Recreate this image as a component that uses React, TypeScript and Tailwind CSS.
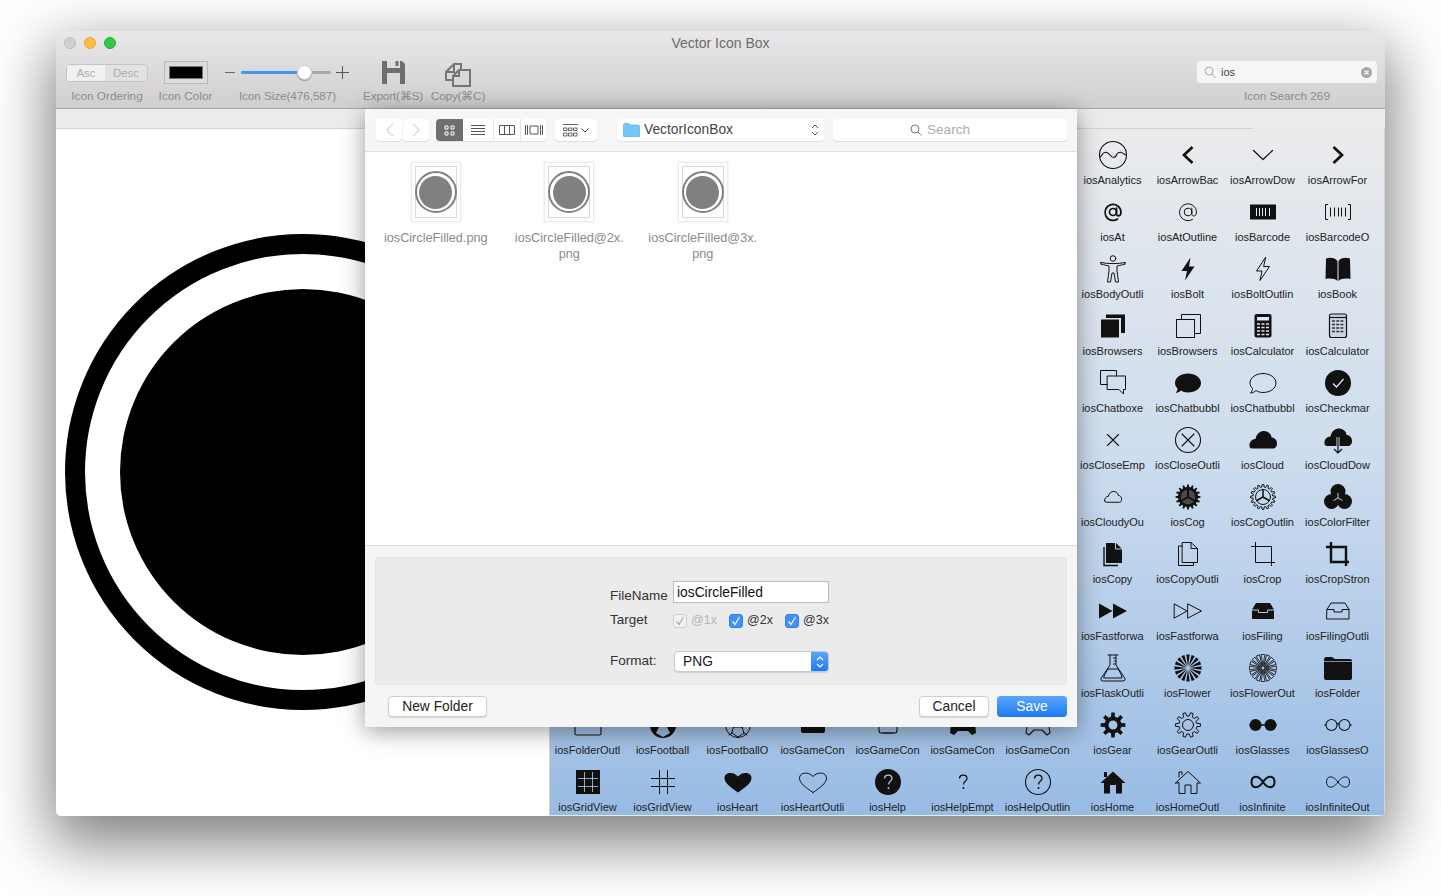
import type { ReactNode } from 'react';

const gearPoints = (teeth: number, outer: number, inner: number) => {
  const step = (Math.PI * 2) / teeth;
  const pts: string[] = [];
  for (let k = 0; k < teeth; k++) {
    const a = k * step;
    [
      [inner, a - step * 0.3],
      [outer, a - step * 0.17],
      [outer, a + step * 0.17],
      [inner, a + step * 0.3],
    ].forEach(([r, t]) => pts.push(`${(r * Math.cos(t)).toFixed(2)} ${(r * Math.sin(t)).toFixed(2)}`));
  }
  return `M${pts.join('L')}Z`;
};

const Line = ({ children, w = 1.1 }: { children: ReactNode; w?: number }) => (
  <g fill="none" stroke="currentColor" strokeWidth={w} strokeLinecap="round" strokeLinejoin="round">
    {children}
  </g>
);

const Spokes = ({ r = 8, w = 1.4 }: { r?: number; w?: number }) => (
  <g stroke="currentColor" strokeWidth={w}>
    <path d={`M0 0V${-r}M0 0L${r * 0.87} ${r * 0.5}M0 0L${-r * 0.87} ${r * 0.5}`} />
  </g>
);

const cloud = 'M-13.500 6C-14 2-11-1-7.500-1C-6.500-6.500-2.500-9 1-9C5-9 8.500-6 8.500-2.500C11.500-2.500 14 0 14 3.500C14 7 12 8.500 10 8.500H-10C-12 8.500-13.500 8-13.500 6Z';
const heart = 'M0 10.5C-8 5-13.5 1-13.5-4C-13.5-9.500-5-11 0-5.500C5-11 13.500-9.500 13.500-4C13.500 1 8 5 0 10.500Z';
const infinite = 'M0 0C-3-4.500-6.500-5.500-8.500-5C-12.500-4-12.500 4-8.500 5C-6.500 5.500-3 4.500 0 0C3-4.500 6.500-5.500 8.500-5C12.500-4 12.500 4 8.500 5C6.500 5.500 3 4.500 0 0Z';
const bolt = 'M2.500-11.500L-6.500 2H-1L-3 11.500L6.500-2.500H1Z';
const flask = 'M-3-13V-3L-12 10.500Q-12.500 13-10 13H10Q12.500 13 12 10.500L3-3V-13';
const bubble = 'M0-9.500C7-9.500 13-5.500 13 0C13 5.500 7 9.500 0 9.500C-3 9.500-5.500 8.500-7 7.500C-8.500 9-10.500 10-12.500 10C-11 8.500-10.500 7-10.500 5.500C-12 4-13 2-13 0C-13-5.500-7-9.500 0-9.500Z';
const homeBody = 'M-12.500 1L0-10.500L12.500 1H9V11.500H3V3H-3V11.500H-9V1Z';
const helpMark = 'M-3.500-3.500C-3.500-8 4-8 4-3.500C4-1 0.500-1 0.500 2.500';

const icons: Record<string, ReactNode> = {
  analytics: (
    <Line>
      <circle r="13.500" />
      <path d="M-12.500 2C-9-4-6-4-3 0C-1 3 2 4 4-1C6-4 9-3 12.500 0" />
    </Line>
  ),
  back: <Line w={2.700}><path d="M4.500-8L-4 0L4.500 8" strokeLinecap="butt" strokeLinejoin="miter" /></Line>,
  down: <Line w={1.200}><path d="M-9.500-4.500L0 4.500L9.500-4.500" /></Line>,
  forward: <Line w={2.700}><path d="M-4.500-8L4 0L-4.500 8" strokeLinecap="butt" strokeLinejoin="miter" /></Line>,
  at: (
    <Line w={1.700}>
      <circle r="3.500" />
      <path d="M3.500-4V1.500C3.500 5 8 5 8 0A8 8 0 1 0 4.500 7" />
    </Line>
  ),
  atOutline: (
    <Line w={1}>
      <circle r="3.800" />
      <path d="M3.800-4V1.500C3.800 5 8.500 5 8.500 0A8.500 8.500 0 1 0 4.500 7.500" />
    </Line>
  ),
  barcode: (
    <>
      <rect x="-13" y="-7.500" width="26" height="15" fill="currentColor" />
      <path d="M-6.500-4V4M-3.500-4V4M-0.500-4V4M2.500-4V4M6.500-4V4" stroke="#e6e9ee" strokeWidth="1" />
    </>
  ),
  barcodeOutline: (
    <Line w={1}>
      <path d="M-10-7.500H-12.500V7.500H-10M10-7.500H12.500V7.500H10" strokeLinecap="butt" strokeLinejoin="miter" />
      <path d="M-7.500-4.500V4.500M-3.500-4.500V4.500M0.500-4.500V4.500M3.500-4.500V4.500M7.500-4.500V4.500" strokeLinecap="butt" />
    </Line>
  ),
  body: (
    <Line w={1}>
      <circle cy="-10.500" r="2.800" />
      <path d="M-12-6.500C-6-5 6-5 12-6.500M-12-5C-8-3.500-5-3.500-4-3L-4 2L-5.500 13H-2.500L-1 4H1L2.500 13H5.500L4 2L4-3C5-3.500 8-3.500 12-5" />
      <path d="M-12-6.500V-5M12-6.500V-5" />
    </Line>
  ),
  bolt: <path d={bolt} fill="currentColor" />,
  boltOutline: <Line w={1}><path d={bolt} /></Line>,
  book: (
    <path
      fill="currentColor"
      d="M-0.500-8C-3-11.500-8-12-12-10.500L-12.500 10C-8 9-3 9.500-0.500 12ZM0.500-8C3-11.500 8-12 12-10.500L12.500 10C8 9 3 9.500 0.500 12Z"
    />
  ),
  browsers: (
    <>
      <rect x="-12" y="-6.500" width="18" height="18" fill="currentColor" />
      <path d="M-7-8V-11.500H12V7H8V-8Z" fill="currentColor" />
    </>
  ),
  browsersOutline: (
    <Line w={1}>
      <rect x="-11.500" y="-6.500" width="18" height="18" strokeLinejoin="miter" />
      <path d="M-6.500-6.500V-11.500H12.500V7.500H6.500" strokeLinejoin="miter" />
    </Line>
  ),
  calculator: (
    <>
      <rect x="-8.500" y="-12" width="17" height="23.500" rx="2" fill="currentColor" />
      <rect x="-6" y="-9" width="12" height="3.500" fill="#dfe6f0" />
      <path d="M-6-2H6M-6 1.500H6M-6 5H6M-6 8.500H6" stroke="#dfe6f0" strokeWidth="1.600" strokeDasharray="3 1.500" />
    </>
  ),
  calculatorOutline: (
    <>
      <rect x="-8.500" y="-12" width="17" height="23.500" rx="2" fill="#c9d5e6" stroke="currentColor" strokeWidth="1.200" />
      <path d="M-8-8.500H8" stroke="currentColor" strokeWidth="1.200" />
      <path d="M-6-5H6M-6-1.500H6M-6 2H6M-6 5.500H6" stroke="#333" strokeWidth="1.500" strokeDasharray="3 1.200" />
    </>
  ),
  chatboxes: (
    <Line w={1}>
      <path d="M3.500-7V-12.500H-12.500V1.500H-5.500" strokeLinejoin="miter" />
      <path d="M-5.500-7H12.500V6.500H10.500V11L6 6.500H-5.500Z" strokeLinejoin="miter" />
    </Line>
  ),
  chatbubble: <path d={bubble} fill="currentColor" />,
  chatbubbleOutline: <Line w={1}><path d={bubble} /></Line>,
  checkmark: (
    <>
      <circle r="13" fill="currentColor" />
      <path d="M-5 0.500L-1.500 4L5.500-4" fill="none" stroke="#e4eaf3" strokeWidth="1.200" />
    </>
  ),
  closeEmpty: <Line w={1.100}><path d="M-5.500-5.500L5.500 5.500M5.500-5.500L-5.500 5.500" /></Line>,
  closeOutline: (
    <Line w={1.100}>
      <circle r="12.500" />
      <path d="M-6-6L6 6M6-6L-6 6" />
    </Line>
  ),
  cloud: <path d={cloud} fill="currentColor" />,
  cloudDownload: (
    <>
      <path d={cloud} transform="translate(0 -2.500)" fill="currentColor" />
      <path d="M0-3V13M-4 9L0 13L4 9" fill="none" stroke="#c2d4ea" strokeWidth="3" />
      <path d="M0-3V13M-4 9L0 13L4 9" fill="none" stroke="currentColor" strokeWidth="1.200" />
    </>
  ),
  cloudyOutline: <Line w={1}><path d={cloud} transform="scale(0.62)" strokeWidth={1.600} /></Line>,
  cog: (
    <>
      <path d={gearPoints(16, 12.500, 10)} fill="currentColor" />
      <circle r="8" fill="#4a4a4a" stroke="currentColor" strokeWidth="1.500" />
      <Spokes r={7.500} w={2} />
    </>
  ),
  cogOutline: (
    <>
      <Line w={1}><path d={gearPoints(16, 12.500, 10)} /><circle r="7.500" /></Line>
      <Spokes r={7.500} w={1.500} />
    </>
  ),
  colorFilter: (
    <>
      <circle cy="-5.500" r="7.500" fill="currentColor" />
      <circle cx="-6.500" cy="4.500" r="7.500" fill="currentColor" />
      <circle cx="6.500" cy="4.500" r="7.500" fill="currentColor" />
      <g stroke="#bdd2ea" strokeWidth="1"><path d="M0 1V-4M0 1L4.500 3.500M0 1L-4.500 3.500" /></g>
    </>
  ),
  copy: (
    <>
      <path d="M-7-11H3L9-5V9H-7Z" fill="currentColor" />
      <path d="M2.500-11V-5H9" fill="none" stroke="#bed2ea" strokeWidth="1" />
      <path d="M-9-7V11.500H5" fill="none" stroke="currentColor" strokeWidth="1.400" />
    </>
  ),
  copyOutline: (
    <Line w={1}>
      <path d="M-5.500-11.500H3L9.500-5.500V8.500H-5.500Z" strokeLinejoin="miter" />
      <path d="M3-11.500V-5.500H9.500" />
      <path d="M-5.500-8H-9.500V11.500H5.500V8.500" strokeLinejoin="miter" />
    </Line>
  ),
  crop: (
    <Line w={1}>
      <path d="M-7.500-12V-7.500H8.500V12M-12-7.500H-7.500V8.500H12" strokeLinecap="butt" strokeLinejoin="miter" />
    </Line>
  ),
  cropStrong: (
    <Line w={2.400}>
      <path d="M-7-12V8H11M-12-7H8V12" strokeLinecap="butt" strokeLinejoin="miter" />
    </Line>
  ),
  fastforward: <path fill="currentColor" d="M-14-7.500L-0.500 0L-14 7.500ZM0-7.500L14 0L0 7.500Z" />,
  fastforwardOutline: (
    <Line w={1}>
      <path d="M-13.500-7L-1 0L-13.500 7ZM0-7L13.500 0L0 7Z" />
    </Line>
  ),
  filing: (
    <>
      <path d="M-11-1.500L-7-8H7L11-1.500V8H-11Z" fill="currentColor" />
      <path d="M-11.500-1H-4.500V1.500H4.500V-1H11.500" fill="none" stroke="#b3cbe7" strokeWidth="1" />
    </>
  ),
  filingOutline: (
    <Line w={1}>
      <path d="M-11-1.500L-7-8H7L11-1.500V8H-11Z" />
      <path d="M-11-1.500H-4V1H4V-1.500H11" />
    </Line>
  ),
  flask: (
    <>
      <Line w={1}>
        <path d={flask} />
        <path d="M-5-13H5M-8 6L-5 1H5L8 6L9 10H-9Z" />
      </Line>
      <path d="M0-10H3M1-7H3M0-4H3" stroke="currentColor" strokeWidth="1" />
    </>
  ),
  flower: (
    <g fill="currentColor">
      {[...Array(16)].map((_, i) => (
        <path key={i} d="M0-1.500L-1.700-13.500H1.700Z" transform={`rotate(${(i * 360) / 16})`} />
      ))}
    </g>
  ),
  flowerOutline: (
    <>
      <g fill="none" stroke="currentColor" strokeWidth="0.800">
        {[...Array(16)].map((_, i) => (
          <path key={i} d="M0-2.500L-1.900-13.500H1.900Z" transform={`rotate(${(i * 360) / 16})`} />
        ))}
      </g>
      <circle r="2" fill="none" stroke="currentColor" strokeWidth="1" />
    </>
  ),
  folder: (
    <>
      <path d="M-14-8.500Q-14-11-12-11H-6L-3-9H12Q14-9 14-7V10Q14 12 12 12H-12Q-14 12-14 10Z" fill="currentColor" />
      <path d="M-14-6.500H14" stroke="#a6c3e5" strokeWidth="0.700" />
    </>
  ),
  folderOutline: <Line w={1.100}><rect x="-13" y="-8" width="26" height="18" rx="1.500" /></Line>,
  football: (
    <>
      <circle r="13" fill="currentColor" />
      <path d="M-4 2H4L7 8L0 12L-7 8Z" fill="#9dbde4" />
    </>
  ),
  footballOutline: (
    <Line w={1}>
      <circle r="12.500" />
      <path d="M-4 2H4L6 8L0 12L-6 8ZM-4 2L-11 0M4 2L11 0M6 8L9 10M-6 8L-9 10" />
    </Line>
  ),
  gameA: <path d="M-12 0H12V6Q12 8 10 8H-10Q-12 8-12 6Z" fill="currentColor" />,
  gameAOutline: <Line w={1.100}><path d="M-9 2V5Q-9 8-7 8H7Q9 8 9 5V2" /><path d="M-5 8H5" /></Line>,
  gameB: <path d="M-12-2H12L13 8L9 10L5 6H-5L-9 10L-13 8Z" fill="currentColor" />,
  gameBOutline: <Line w={1.100}><path d="M-11 2L-12 8L-9 10L-4 5H4L9 10L12 8L11 2" /></Line>,
  gear: (
    <path
      fillRule="evenodd"
      fill="currentColor"
      d={`${gearPoints(8, 12.500, 8.500)}M4.500 0A4.500 4.500 0 1 0-4.500 0A4.500 4.500 0 1 0 4.500 0Z`}
    />
  ),
  gearOutline: (
    <Line w={1}>
      <path d={gearPoints(10, 12.500, 9)} />
      <circle r="5.500" />
    </Line>
  ),
  glasses: (
    <>
      <circle cx="-7.500" r="6" fill="currentColor" />
      <circle cx="7.500" r="6" fill="currentColor" />
      <path d="M-13.500 0H13.500" stroke="currentColor" strokeWidth="1.500" />
    </>
  ),
  glassesOutline: (
    <Line w={1.100}>
      <circle cx="-6.500" r="5.500" />
      <circle cx="6.500" r="5.500" />
      <path d="M-1-1C-0.500-1.500 0.500-1.500 1-1M-12 0H-13.500M12 0H13.500" />
    </Line>
  ),
  grid: (
    <>
      <rect x="-12" y="-12" width="24" height="24" fill="currentColor" />
      <path d="M-3.500-10V10M4.500-10V10M-10-3.500H10M-10 4.500H10" stroke="#b7cfec" strokeWidth="0.800" />
    </>
  ),
  gridOutline: <Line w={1}><path d="M-3.500-12V12M4.500-12V12M-12-3.500H12M-12 4.500H12" strokeLinecap="butt" /></Line>,
  heart: <path d={heart} fill="currentColor" />,
  heartOutline: <Line w={1}><path d={heart} /></Line>,
  help: (
    <>
      <circle r="13" fill="currentColor" />
      <path d={helpMark} fill="none" stroke="#a8c4e6" strokeWidth="1.300" />
      <circle cx="0.500" cy="6" r="1" fill="#a8c4e6" />
    </>
  ),
  helpEmpty: (
    <>
      <path d={helpMark} fill="none" stroke="currentColor" strokeWidth="1.300" />
      <circle cx="0.500" cy="6" r="1" fill="currentColor" />
    </>
  ),
  helpOutline: (
    <>
      <circle r="12.500" fill="none" stroke="currentColor" strokeWidth="1.100" />
      <path d={helpMark} fill="none" stroke="currentColor" strokeWidth="1.300" />
      <circle cx="0.500" cy="6" r="1" fill="currentColor" />
    </>
  ),
  home: (
    <>
      <path d="M-9-10H-6V-5H-9Z" fill="currentColor" />
      <path d={homeBody} fill="currentColor" />
    </>
  ),
  homeOutline: (
    <Line w={1}>
      <path d="M-9-5V-10H-6V-7.500" strokeLinejoin="miter" />
      <path d={homeBody} strokeLinejoin="miter" />
    </Line>
  ),
  infinite: <Line w={2}><path d={infinite} /></Line>,
  infiniteOutline: <Line w={1}><path d={infinite} /></Line>,
};

type Cell = { name: string; icon: string } | null;

const c = (name: string, icon: string): Cell => ({ name, icon });
const hidden: Cell[] = [null, null, null, null, null, null, null];

const rows: Cell[][] = [
  [...hidden, c('iosAnalytics', 'analytics'), c('iosArrowBac', 'back'), c('iosArrowDow', 'down'), c('iosArrowFor', 'forward')],
  [...hidden, c('iosAt', 'at'), c('iosAtOutline', 'atOutline'), c('iosBarcode', 'barcode'), c('iosBarcodeO', 'barcodeOutline')],
  [...hidden, c('iosBodyOutli', 'body'), c('iosBolt', 'bolt'), c('iosBoltOutlin', 'boltOutline'), c('iosBook', 'book')],
  [...hidden, c('iosBrowsers', 'browsers'), c('iosBrowsers', 'browsersOutline'), c('iosCalculator', 'calculator'), c('iosCalculator', 'calculatorOutline')],
  [...hidden, c('iosChatboxe', 'chatboxes'), c('iosChatbubbl', 'chatbubble'), c('iosChatbubbl', 'chatbubbleOutline'), c('iosCheckmar', 'checkmark')],
  [...hidden, c('iosCloseEmp', 'closeEmpty'), c('iosCloseOutli', 'closeOutline'), c('iosCloud', 'cloud'), c('iosCloudDow', 'cloudDownload')],
  [...hidden, c('iosCloudyOu', 'cloudyOutline'), c('iosCog', 'cog'), c('iosCogOutlin', 'cogOutline'), c('iosColorFilter', 'colorFilter')],
  [...hidden, c('iosCopy', 'copy'), c('iosCopyOutli', 'copyOutline'), c('iosCrop', 'crop'), c('iosCropStron', 'cropStrong')],
  [...hidden, c('iosFastforwa', 'fastforward'), c('iosFastforwa', 'fastforwardOutline'), c('iosFiling', 'filing'), c('iosFilingOutli', 'filingOutline')],
  [...hidden, c('iosFlaskOutli', 'flask'), c('iosFlower', 'flower'), c('iosFlowerOut', 'flowerOutline'), c('iosFolder', 'folder')],
  [
    c('iosFolderOutl', 'folderOutline'), c('iosFootball', 'football'), c('iosFootballO', 'footballOutline'), c('iosGameCon', 'gameA'),
    c('iosGameCon', 'gameAOutline'), c('iosGameCon', 'gameB'), c('iosGameCon', 'gameBOutline'), c('iosGear', 'gear'),
    c('iosGearOutli', 'gearOutline'), c('iosGlasses', 'glasses'), c('iosGlassesO', 'glassesOutline'),
  ],
  [
    c('iosGridView', 'grid'), c('iosGridView', 'gridOutline'), c('iosHeart', 'heart'), c('iosHeartOutli', 'heartOutline'),
    c('iosHelp', 'help'), c('iosHelpEmpt', 'helpEmpty'), c('iosHelpOutlin', 'helpOutline'), c('iosHome', 'home'),
    c('iosHomeOutl', 'homeOutline'), c('iosInfinite', 'infinite'), c('iosInfiniteOut', 'infiniteOutline'),
  ],
];

function IconCell({ cell }: { cell: Cell }) {
  if (!cell) return <div className="h-[57px]" />;
  return (
    <div className="flex h-[57px] flex-col items-center pt-2">
      <svg viewBox="-18 -18 36 36" className="h-9 w-9 text-[#111]">
        {icons[cell.icon]}
      </svg>
      <span className="mt-[1px] whitespace-nowrap text-[11px] leading-3 text-[#222]">{cell.name}</span>
    </div>
  );
}

function ToolbarItem({ label, className, children }: { label: string; className: string; children: ReactNode }) {
  return (
    <div className={`flex flex-col items-center ${className}`}>
      <div className="flex h-[26px] items-center">{children}</div>
      <span className="mt-[4px] whitespace-nowrap text-[11.800px] leading-[14px] text-[#8c8c8c]">{label}</span>
    </div>
  );
}

function Toolbar() {
  return (
    <div className="h-[78px] shrink-0 rounded-t-[5px] border-b border-[#a9a9a9] bg-gradient-to-b from-[#e9e7e9] to-[#d0ced0]">
      <div className="relative flex h-[24px] items-center pl-2">
        <div className="flex gap-2">
          <span className="h-3 w-3 rounded-full border border-[#bcbcbc] bg-[#cfcfcf]" />
          <span className="h-3 w-3 rounded-full border border-[#e6a63a] bg-[#fdbc40]" />
          <span className="h-3 w-3 rounded-full border border-[#2ba83c] bg-[#33c748]" />
        </div>
        <span className="flex-1 pr-[60px] text-center text-[14px] text-[#6b6b6b]">Vector Icon Box</span>
      </div>
      <div className="flex pt-[4px]">
        <ToolbarItem label="Icon Ordering" className="ml-[10px] w-[82px]">
          <div className="mt-[2px] flex h-[18px] w-[82px] overflow-hidden rounded-[4px] border border-[#c4c4c4] bg-[#f1f1f1] text-[11.500px] leading-4 text-[#adadad]">
            <span className="w-[38px] bg-[#f1f1f1] text-center">Asc</span>
            <span className="flex-1 bg-[#e2e2e2] text-center">Desc</span>
          </div>
        </ToolbarItem>
        <ToolbarItem label="Icon Color" className="ml-[10px] w-[55px]">
          <div className="flex h-[23px] w-[44px] items-center justify-center border border-[#b9b9b9] bg-[#dcdcdc]">
            <div className="h-[13px] w-[34px] border border-[#777] bg-black" />
          </div>
        </ToolbarItem>
        <ToolbarItem label="Icon Size(476,587)" className="ml-[12px] w-[125px] tracking-[-0.1px]">
          <div className="-ml-px flex items-center">
            <span className="h-px w-[10px] bg-[#666]" />
            <div className="ml-[6px] h-[3px] w-[56px] rounded-l-full bg-[#3f97f6]" />
            <div className="h-[15px] w-[15px] rounded-full border border-[#cfcfcf] bg-white shadow-[0_1px_1px_rgba(0,0,0,0.3)]" />
            <div className="h-[3px] w-[19px] rounded-r-full bg-[#a9a9a9]" />
            <svg viewBox="0 0 13 13" className="ml-[5px] h-[13px] w-[13px] text-[#555]">
              <path d="M0 6.500H13M6.500 0V13" stroke="currentColor" strokeWidth="1" />
            </svg>
          </div>
        </ToolbarItem>
        <ToolbarItem label="Export(⌘S)" className="ml-[13px] w-[60px] tracking-[-0.2px]">
          <svg viewBox="0 0 23 23" className="h-[23px] w-[23px] text-[#6e6e6e]">
            <path
              fill="currentColor"
              fillRule="evenodd"
              d="M0 0H20L23 3V23H0ZM5 0V7H18V0ZM5 12V23H18V12Z"
            />
            <path d="M13.500 0H16.500V5H13.500Z" fill="currentColor" />
          </svg>
        </ToolbarItem>
        <ToolbarItem label="Copy(⌘C)" className="ml-[8px] w-[54px] tracking-[-0.2px]">
          <svg viewBox="0 0 26 24" className="mt-[6px] h-[24px] w-[26px] text-[#757575]">
            <g fill="none" stroke="currentColor" strokeWidth="2">
              <path d="M8 17H1V9L9 1H16V7" />
              <path d="M9 1V9H1" />
              <path d="M8 23V13L14 7H25V23Z" />
              <path d="M14 7V13H8" />
            </g>
          </svg>
        </ToolbarItem>
        <ToolbarItem label="Icon Search 269" className="ml-auto mr-[8px] w-[180px]">
          <div className="flex h-[22px] w-[180px] items-center rounded-[4px] bg-[#f6f6f6] pl-[7px] pr-[5px]">
            <svg viewBox="0 0 12 12" className="h-3 w-3 text-[#a8a8a8]">
              <circle cx="5" cy="5" r="4" fill="none" stroke="currentColor" />
              <path d="M8 8L11.500 11.500" stroke="currentColor" />
            </svg>
            <span className="ml-[5px] flex-1 text-[11px] text-[#444]">ios</span>
            <svg viewBox="0 0 11 11" className="h-[11px] w-[11px]">
              <circle cx="5.500" cy="5.500" r="5.500" fill="#a8a8a8" />
              <path d="M3.500 3.500L7.500 7.500M7.500 3.500L3.500 7.500" stroke="#f6f6f6" strokeWidth="1.200" />
            </svg>
          </div>
        </ToolbarItem>
      </div>
    </div>
  );
}

function FileTile({ lines }: { lines: string[] }) {
  return (
    <div className="flex w-[133.500px] flex-col items-center">
      <div className="flex h-[60px] w-[50px] items-center justify-center border border-[#ececec] bg-white shadow-[0_0_2px_rgba(0,0,0,0.12)]">
        <div className="flex h-[52px] w-[42px] items-center justify-center border border-[#d8d8d8]">
          <div className="flex h-[42px] w-[42px] shrink-0 items-center justify-center rounded-full border-2 border-[#808080] bg-white">
            <div className="h-[33px] w-[33px] rounded-full bg-[#808080]" />
          </div>
        </div>
      </div>
      <div className="mt-[8px] text-center text-[12.700px] leading-[16px] text-[#8a8a8a]">
        {lines.map((l) => (
          <div key={l}>{l}</div>
        ))}
      </div>
    </div>
  );
}

function Check({ on }: { on: boolean }) {
  return (
    <span
      className={`flex h-[14px] w-[14px] items-center justify-center rounded-[3px] border ${
        on ? 'border-[#2f86f2] bg-[#3f8ff5]' : 'border-[#cfcfcf] bg-[#f2f2f2]'
      }`}
    >
      <svg viewBox="0 0 10 10" className="h-[10px] w-[10px]">
        <path d="M1.500 5.500L4 8.500L8.500 1" fill="none" stroke={on ? '#fff' : '#aaa'} strokeWidth="1.200" />
      </svg>
    </span>
  );
}

const toolBtn = 'flex h-[22px] items-center justify-center rounded-[4px] bg-white shadow-[0_1px_1px_rgba(0,0,0,0.1)]';

function SaveSheet() {
  return (
    <div className="absolute left-[309px] top-[78px] flex h-[618px] w-[712px] flex-col bg-[#f5f5f5] shadow-[0_4px_22px_rgba(0,0,0,0.4)]">
      <div className="flex h-[43px] shrink-0 items-center border-b border-[#e0e0e0] bg-[#f6f6f6] pl-[11px] pr-[10px]">
        <div className={`${toolBtn} w-[26px]`}>
          <svg viewBox="0 0 10 16" className="h-[14px] w-[9px]"><path d="M9 1L2 8L9 15" fill="none" stroke="#cfcfcf" strokeWidth="1.200" /></svg>
        </div>
        <div className={`${toolBtn} ml-px w-[26px]`}>
          <svg viewBox="0 0 10 16" className="h-[14px] w-[9px]"><path d="M1 1L8 8L1 15" fill="none" stroke="#cfcfcf" strokeWidth="1.200" /></svg>
        </div>
        <div className="ml-[7px] flex h-[22px] w-[110px] overflow-hidden rounded-[4px] bg-white shadow-[0_1px_1px_rgba(0,0,0,0.1)]">
          <div className="flex w-[27px] items-center justify-center bg-[#6f6f6f]">
            <svg viewBox="0 0 11 11" className="h-[11px] w-[11px]">
              <path d="M1 1H4V4H1ZM7 1H10V4H7ZM1 7H4V10H1ZM7 7H10V10H7Z" fill="none" stroke="#fff" />
            </svg>
          </div>
          <div className="flex w-[31px] items-center justify-center border-r border-[#e4e4e4]">
            <svg viewBox="0 0 14 10" className="h-[10px] w-[14px]">
              <path d="M0 .5H14M0 3.500H14M0 6.500H14M0 9.500H14" stroke="#555" strokeWidth="1" />
            </svg>
          </div>
          <div className="flex w-[27px] items-center justify-center border-r border-[#e4e4e4]">
            <svg viewBox="0 0 16 10" className="h-[10px] w-[16px]">
              <path d="M.5 .5H15.500V9.500H.5ZM5.500 .5V9.500M10.500 .5V9.500" fill="none" stroke="#555" />
            </svg>
          </div>
          <div className="flex flex-1 items-center justify-center">
            <svg viewBox="0 0 18 10" className="h-[10px] w-[18px]">
              <path d="M.5 0V10M2.500 0V10M15.500 0V10M17.500 0V10M5 1H13V9H5Z" fill="none" stroke="#555" />
            </svg>
          </div>
        </div>
        <div className={`${toolBtn} ml-[9px] w-[42px] gap-[3px]`}>
          <svg viewBox="0 0 15 13" className="h-[13px] w-[15px]">
            <path d="M0 .5H15M.5 4H4V6.500H.5ZM5.500 4H9V6.500H5.500ZM10.500 4H14V6.500H10.500ZM.5 9H4V12H.5ZM5.500 9H9V12H5.500ZM10.500 9H14V12H10.500Z" fill="none" stroke="#666" strokeWidth="1" />
          </svg>
          <svg viewBox="0 0 8 5" className="h-[5px] w-[8px]"><path d="M.5 .5L4 4L7.500 .5" fill="none" stroke="#444" /></svg>
        </div>
        <div className={`${toolBtn} ml-[20px] w-[207px] justify-start pl-[6px]`}>
          <svg viewBox="0 0 17 14" className="h-[14px] w-[17px]">
            <path d="M.5 2Q.5 .5 2 .5H6L7.500 2H15Q16.500 2 16.500 3.500V13.500H.5Z" fill="#75c6f7" stroke="#58aee6" strokeWidth=".7" />
          </svg>
          <span className="ml-[4px] mt-[1px] flex-1 text-[13.800px] text-[#444]">VectorIconBox</span>
          <svg viewBox="0 0 8 14" className="mr-[5px] h-[14px] w-[8px]">
            <path d="M1 5L4 2L7 5M1 9L4 12L7 9" fill="none" stroke="#555" />
          </svg>
        </div>
        <div className={`${toolBtn} ml-[9px] flex-1 gap-[5px] pr-[20px]`}>
          <svg viewBox="0 0 12 12" className="h-3 w-3">
            <circle cx="5" cy="5" r="4" fill="none" stroke="#777" />
            <path d="M8 8L11.500 11.500" stroke="#777" />
          </svg>
          <span className="mt-[1px] text-[13.500px] text-[#acacac]">Search</span>
        </div>
      </div>

      <div className="flex h-[394px] shrink-0 items-start border-b border-[#dcdcdc] bg-white pl-[4px] pt-[10px]">
        <FileTile lines={['iosCircleFilled.png']} />
        <FileTile lines={['iosCircleFilled@2x.', 'png']} />
        <FileTile lines={['iosCircleFilled@3x.', 'png']} />
      </div>

      <div className="mx-[10px] mt-[11px] h-[128px] rounded-[3px] border border-[#e4e4e4] bg-[#ebebeb] pl-[234px] pt-[23px] text-[#333]">
        <div className="flex h-[22px] items-center">
          <span className="mt-[9px] w-[63px] text-[13.500px]">FileName</span>
          <div className="flex h-[22px] w-[156px] items-center border border-[#bcbcbc] bg-white pl-[3px] pt-[2px] text-[13.800px] text-[#111]">
            iosCircleFilled
          </div>
        </div>
        <div className="mt-[10px] flex h-[15px] items-center text-[12.500px]">
          <span className="w-[63px] text-[13.500px]">Target</span>
          <Check on={false} />
          <span className="ml-[4px] w-[38px] text-[#b5b5b5]">@1x</span>
          <Check on />
          <span className="ml-[4px] w-[38px]">@2x</span>
          <Check on />
          <span className="ml-[4px]">@3x</span>
        </div>
        <div className="mt-[23px] flex h-[21px] items-center">
          <span className="w-[64px] text-[13.500px]">Format:</span>
          <div className="flex h-[21px] w-[155px] overflow-hidden rounded-[4px] border border-[#c9c9c9] bg-white shadow-[0_1px_1px_rgba(0,0,0,0.1)]">
            <span className="flex-1 pl-[8px] text-[13.800px] leading-[20px] text-[#222]">PNG</span>
            <div className="flex w-[17px] items-center justify-center bg-gradient-to-b from-[#5ba6fb] to-[#1a78f4]">
              <svg viewBox="0 0 8 14" className="h-[14px] w-[8px]">
                <path d="M1 5L4 2L7 5M1 9L4 12L7 9" fill="none" stroke="#fff" strokeWidth="1.200" />
              </svg>
            </div>
          </div>
        </div>
      </div>

      <div className="mt-[11px] flex items-start px-[10px] text-[13.800px] text-[#222]">
        <button className="ml-[13px] h-[21px] w-[99px] rounded-[4px] border border-[#cfcfcf] bg-white leading-[19px] shadow-[0_1px_1px_rgba(0,0,0,0.12)]">
          New Folder
        </button>
        <button className="ml-auto h-[21px] w-[70px] rounded-[4px] border border-[#cfcfcf] bg-white leading-[19px] shadow-[0_1px_1px_rgba(0,0,0,0.12)]">
          Cancel
        </button>
        <button className="ml-[8px] h-[21px] w-[70px] rounded-[4px] bg-gradient-to-b from-[#5ba6fb] to-[#1b79f4] leading-[21px] text-white">
          Save
        </button>
      </div>
    </div>
  );
}

export default function App() {
  return (
    <div className="h-[896px] w-[1441px] overflow-hidden bg-white pl-[56px] pt-[31px] font-['Liberation_Sans',sans-serif]">
      <div className="relative flex h-[785px] w-[1329px] flex-col rounded-[5px] shadow-[0_22px_60px_6px_rgba(0,0,0,0.5)]">
        <Toolbar />
        <div className="flex min-h-0 flex-1 flex-col overflow-hidden rounded-b-[5px] bg-gradient-to-b from-[#ececec] via-[#cddcee] via-50% to-[#98bbe4]">
          <div className="h-[20px] w-[1197px] shrink-0 border-b border-[#d2d2d2] bg-[#ececec]" />
          <div className="flex min-h-0 flex-1">
            <div className="flex w-[493px] shrink-0 items-start bg-white pl-[9px] pt-[105px]">
              <div className="flex h-[476px] w-[476px] items-center justify-center rounded-full border-[20px] border-black">
                <div className="h-[366px] w-[366px] rounded-full bg-black" />
              </div>
            </div>
            <div className="min-w-0 flex-1 overflow-hidden border-x border-b border-x-[#d4d4d4] border-b-[#e4ebf3]">
              <div className="grid grid-cols-[repeat(11,75px)]">
                {rows.flat().map((cell, i) => (
                  <IconCell key={i} cell={cell} />
                ))}
              </div>
            </div>
          </div>
        </div>
        <SaveSheet />
      </div>
    </div>
  );
}
